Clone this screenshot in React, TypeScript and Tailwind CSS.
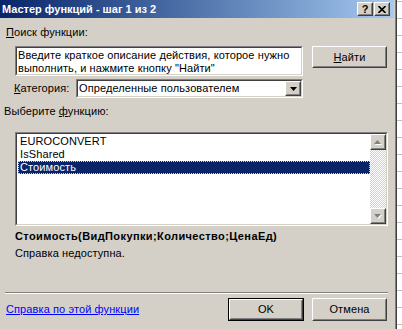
import React from "react"

const FONT = "font-['Liberation_Sans',Arial,sans-serif]"

// classic win9x 3d borders
const raised =
  "border border-t-white border-l-white border-r-[#404040] border-b-[#404040]"
const raisedInner =
  "border border-t-[#d4d0c8] border-l-[#d4d0c8] border-r-[#808080] border-b-[#808080]"
const sunken =
  "border border-t-[#808080] border-l-[#808080] border-r-white border-b-white"
const sunkenInner =
  "border border-t-[#404040] border-l-[#404040] border-r-[#d4d0c8] border-b-[#d4d0c8]"

function Button({ children, w = "w-[75px]", h = "h-[23px]", isDefault = false }: { children: React.ReactNode; w?: string; h?: string; isDefault?: boolean }) {
  const inner = (
    <div className={`${raised} flex-1 flex`}>
      <div className={`${raisedInner} flex-1 flex items-center justify-center text-[11px] text-black`}>{children}</div>
    </div>
  )
  if (isDefault) {
    return <div className={`${w} ${h} flex border border-black`}>{inner}</div>
  }
  return <div className={`${w} ${h} flex`}>{inner}</div>
}

function SmallBtn({ children, className = "" }: { children: React.ReactNode; className?: string }) {
  return (
    <div className={`${raised} flex ${className}`}>
      <div className={`${raisedInner} flex-1 flex items-center justify-center bg-[#d4d0c8]`}>{children}</div>
    </div>
  )
}

function Arrow({ dir, color = "#000" }: { dir: "up" | "down"; color?: string }) {
  const d = dir === "up" ? "M3.5 0 L7 4 L0 4 Z" : "M0 0 L7 0 L3.5 4 Z"
  return (
    <svg width="7" height="4" viewBox="0 0 7 4" className="block">
      <path d={d} fill={color} />
    </svg>
  )
}

function DisabledArrow({ dir }: { dir: "up" | "down" }) {
  const d = dir === "up" ? "M3.5 0 L7 4 L0 4 Z" : "M0 0 L7 0 L3.5 4 Z"
  return (
    <svg width="8" height="5" viewBox="0 0 8 5" className="block">
      <path d={d} transform="translate(1 1)" fill="#fff" />
      <path d={d} fill="#808080" />
    </svg>
  )
}

const ITEMS = ["EUROCONVERT", "IsShared", "Стоимость"]

export default function App() {
  return (
    <div className={`${FONT} flex h-[329px] w-[402px] overflow-hidden bg-white text-[11px] leading-[13px] tracking-[0.1px] text-black`}>
      {/* dialog */}
      <div className="flex w-[397px] flex-col bg-[#d4d0c8] border-r border-[#404040] shadow-[inset_-1px_0_0_#808080]">
        {/* title bar */}
        <div className="flex h-[18px] w-[394px] items-center bg-gradient-to-r from-[#0a246a] to-[#a6caf0] pl-[2px] pr-[4px] tracking-normal">
          <span className="flex-1 text-[11px] font-bold text-white">Мастер функций - шаг 1 из 2</span>
          <SmallBtn className="h-[14px] w-[16px]">
            <span className="text-[11px] font-bold leading-none">?</span>
          </SmallBtn>
          <SmallBtn className="ml-[1px] h-[14px] w-[16px]">
            <svg width="8" height="7" viewBox="0 0 8 7">
              <path d="M0.5 0 L7.5 7 M7.5 0 L0.5 7" stroke="#000" strokeWidth="1.6" />
            </svg>
          </SmallBtn>
        </div>

        <div className="ml-[6px] mt-[8px]">
          <span className="underline">П</span>оиск функции:
        </div>

        <div className="mt-[7px] flex items-start">
          <div className={`${sunken} ml-[15px] flex h-[30px] w-[288px]`}>
            <div className={`${sunkenInner} flex-1 bg-white pl-[1px] pt-[1px] whitespace-nowrap`}>
              Введите краткое описание действия, которое нужно
              <br />
              выполнить, и нажмите кнопку "Найти"
            </div>
          </div>
          <div className="ml-[9px]">
            <Button h="h-[22px]">
              <span className="underline">Н</span>айти
            </Button>
          </div>
        </div>

        <div className="mt-[3px] flex items-center">
          <div className="ml-[14px] w-[62px]">
            <span className="underline">К</span>атегория:
          </div>
          <div className={`${sunken} flex h-[19px] w-[227px]`}>
            <div className={`${sunkenInner} flex flex-1 items-center bg-white`}>
              <span className="flex-1 pl-[1px]">Определенные пользователем</span>
              <SmallBtn className="h-[15px] w-[16px]">
                <Arrow dir="down" />
              </SmallBtn>
            </div>
          </div>
        </div>

        <div className="ml-[4px] mt-[7px]">
          Выберите <span className="underline">ф</span>ункцию:
        </div>

        {/* list box */}
        <div className={`${sunken} ml-[15px] mt-[14px] flex h-[94px] w-[373px]`}>
          <div className={`${sunkenInner} flex flex-1 bg-white`}>
            <div className="flex-1 pl-[1px] pt-[1px]">
              {ITEMS.map((it, i) =>
                i === 2 ? (
                  <div key={it} className="h-[13px] border border-dotted border-[#f0d48c] bg-[#0a246a] pl-[1px] leading-[11px] text-white">
                    {it}
                  </div>
                ) : (
                  <div key={it} className="h-[13px] pl-[2px]">
                    {it}
                  </div>
                )
              )}
            </div>
            {/* scrollbar */}
            <div className="flex w-[16px] flex-col">
              <SmallBtn className="h-[16px] w-[16px]">
                <DisabledArrow dir="up" />
              </SmallBtn>
              <div className="flex-1 bg-[repeating-conic-gradient(#d4d0c8_0_25%,#ffffff_0_50%)] bg-[length:2px_2px]" />
              <SmallBtn className="h-[16px] w-[16px]">
                <DisabledArrow dir="down" />
              </SmallBtn>
            </div>
          </div>
        </div>

        <div className="ml-[15px] mt-[4px] font-bold tracking-[0.4px]">Стоимость(ВидПокупки;Количество;ЦенаЕд)</div>
        <div className="ml-[15px] mt-[4px]">Справка недоступна.</div>

        {/* separator */}
        <div className="ml-[5px] mt-[32px] h-[2px] w-[383px] border-t border-b border-t-[#808080] border-b-white" />

        <div className="mt-[4px] flex items-center">
          <a className="ml-[6px] flex-1 text-[#0000ff] underline">Справка по этой функции</a>
          <Button isDefault w="w-[76px]" h="h-[23px]">OK</Button>
          <div className="ml-[8px] mr-[9px]">
            <Button>Отмена</Button>
          </div>
        </div>
      </div>

      {/* excel sheet behind */}
      <div className="flex flex-1 flex-col pt-[1px]">
        {Array.from({ length: 20 }).map((_, i) => (
          <div key={i} className="h-[17px] shrink-0 border-t border-[#c0c0c0]" />
        ))}
      </div>
    </div>
  )
}
